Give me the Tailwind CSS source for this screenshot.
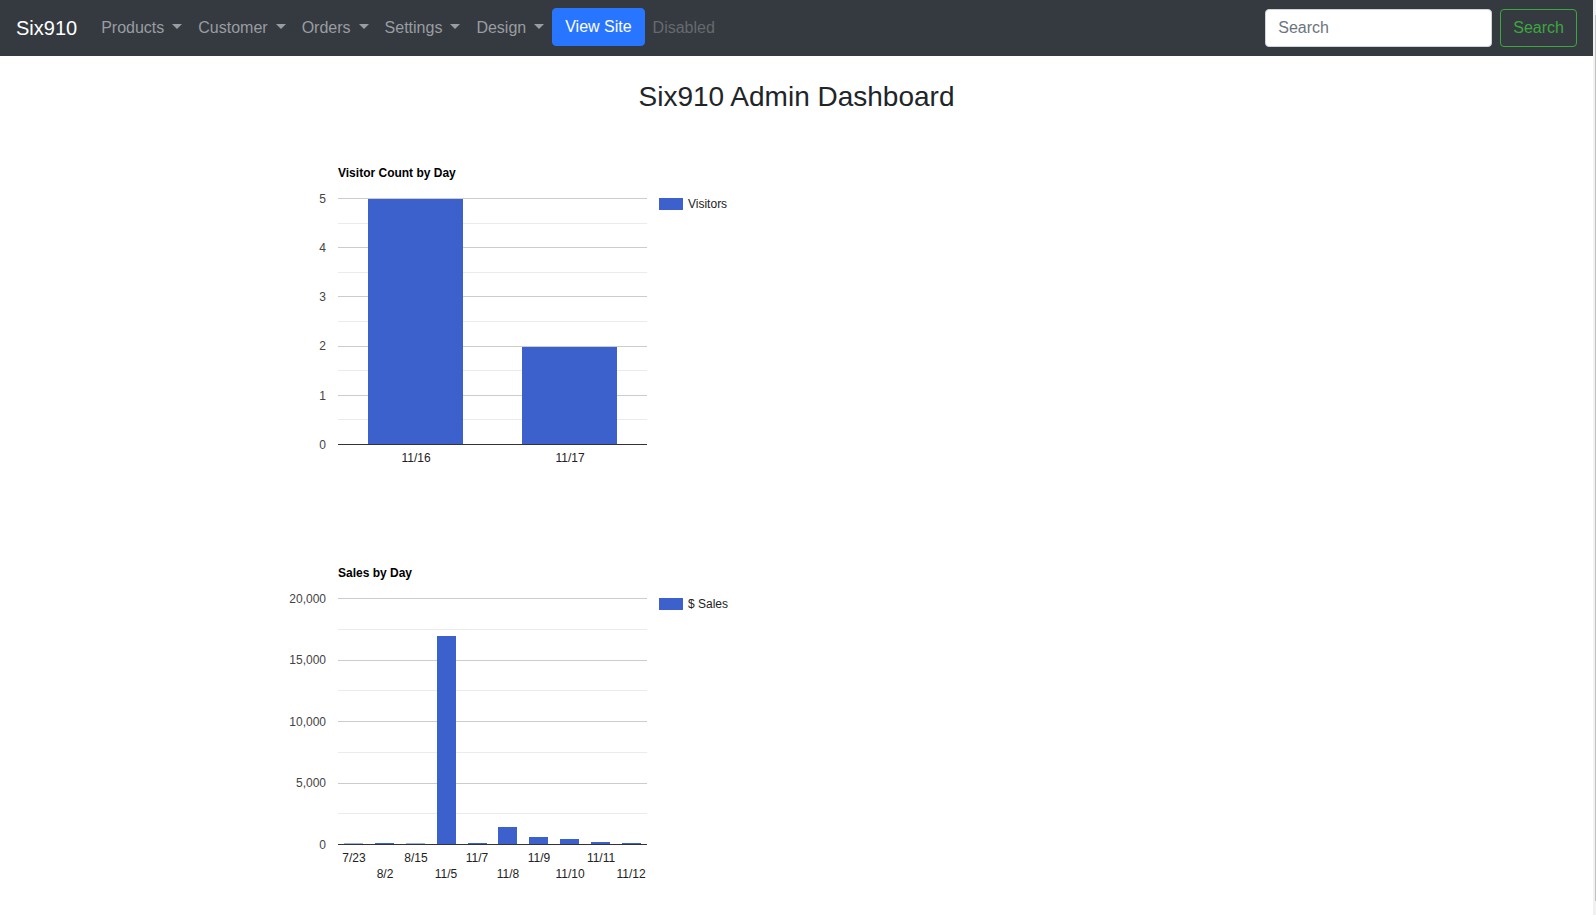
<!DOCTYPE html>
<html lang="en">
<head>
<meta charset="utf-8">
<meta name="viewport" content="width=device-width, initial-scale=1">
<title>Six910 Admin Dashboard</title>
<script src="https://cdn.jsdelivr.net/npm/@tailwindcss/browser@4"></script>
</head>
<body class="flex min-h-screen bg-white font-['Liberation_Sans',Arial,sans-serif] text-base text-[#212529]">
<div class="min-w-0 flex-1">
  <nav class="flex min-h-14 flex-wrap items-center bg-[#343a40] px-4 py-2">
    <a href="#" class="mr-4 text-xl leading-[30px] text-white">Six910</a>
    <ul class="flex flex-1 flex-wrap items-start text-[#9a9da0]">
      <li><a href="#" class="flex items-center gap-2 p-2">Products <svg class="mb-1 h-[5px] w-[10px]" viewBox="0 0 10 5" fill="currentColor" aria-hidden="true"><path d="M0 0h10L5 5z"/></svg></a></li>
      <li><a href="#" class="flex items-center gap-2 p-2">Customer <svg class="mb-1 h-[5px] w-[10px]" viewBox="0 0 10 5" fill="currentColor" aria-hidden="true"><path d="M0 0h10L5 5z"/></svg></a></li>
      <li><a href="#" class="flex items-center gap-2 p-2">Orders <svg class="mb-1 h-[5px] w-[10px]" viewBox="0 0 10 5" fill="currentColor" aria-hidden="true"><path d="M0 0h10L5 5z"/></svg></a></li>
      <li><a href="#" class="flex items-center gap-2 p-2">Settings <svg class="mb-1 h-[5px] w-[10px]" viewBox="0 0 10 5" fill="currentColor" aria-hidden="true"><path d="M0 0h10L5 5z"/></svg></a></li>
      <li><a href="#" class="flex items-center gap-2 p-2">Design <svg class="mb-1 h-[5px] w-[10px]" viewBox="0 0 10 5" fill="currentColor" aria-hidden="true"><path d="M0 0h10L5 5z"/></svg></a></li>
      <li><a href="#" class="block rounded border border-[#2875ff] bg-[#2875ff] px-3 py-1.5 text-white">View Site</a></li>
      <li><a href="#" aria-disabled="true" class="block p-2 text-[#666a6e]">Disabled</a></li>
    </ul>
    <form class="flex items-center gap-2">
      <input type="search" placeholder="Search" aria-label="Search" class="h-[38px] w-[227px] rounded border border-[#ced4da] bg-white px-3 py-1.5 placeholder:text-[#6c757d]">
      <button type="button" class="rounded border border-[#3ea63f] px-3 py-1.5 text-[#3ea63f]">Search</button>
    </form>
  </nav>
  <main>
    <h1 class="mt-6 mb-2 text-center text-[28px] leading-[34px]">Six910 Admin Dashboard</h1>
    <div class="mx-auto max-w-[1109px]">
      <svg class="block h-[400px] w-[500px]" viewBox="0 0 500 400" font-size="12" role="img" aria-label="Visitor Count by Day">
        <text x="96" y="55" font-weight="bold" fill="#000">Visitor Count by Day</text>
        <g fill="#ebebeb">
          <rect x="96" y="101" width="309" height="1"/><rect x="96" y="150" width="309" height="1"/><rect x="96" y="199" width="309" height="1"/><rect x="96" y="248" width="309" height="1"/><rect x="96" y="297" width="309" height="1"/>
        </g>
        <g fill="#ccc">
          <rect x="96" y="76" width="309" height="1"/><rect x="96" y="125" width="309" height="1"/><rect x="96" y="174" width="309" height="1"/><rect x="96" y="224" width="309" height="1"/><rect x="96" y="273" width="309" height="1"/>
        </g>
        <g fill="#3c61cc">
          <rect x="126" y="77" width="95" height="245"/><rect x="280" y="225" width="95" height="97"/>
          <rect x="417" y="76" width="24" height="12"/>
        </g>
        <rect x="96" y="322" width="309" height="1" fill="#333"/>
        <g fill="#444" text-anchor="end">
          <text x="84" y="81">5</text><text x="84" y="130">4</text><text x="84" y="179">3</text><text x="84" y="228">2</text><text x="84" y="278">1</text><text x="84" y="327">0</text>
        </g>
        <g fill="#222" text-anchor="middle"><text x="174" y="340">11/16</text><text x="328" y="340">11/17</text></g>
        <text x="446" y="86" fill="#222">Visitors</text>
      </svg>
      <svg class="block h-[380px] w-[500px]" viewBox="0 0 500 380" font-size="12" role="img" aria-label="Sales by Day">
        <text x="96" y="55" font-weight="bold" fill="#000">Sales by Day</text>
        <g fill="#ebebeb">
          <rect x="96" y="107" width="309" height="1"/><rect x="96" y="168" width="309" height="1"/><rect x="96" y="230" width="309" height="1"/><rect x="96" y="291" width="309" height="1"/>
        </g>
        <g fill="#ccc">
          <rect x="96" y="76" width="309" height="1"/><rect x="96" y="138" width="309" height="1"/><rect x="96" y="199" width="309" height="1"/><rect x="96" y="261" width="309" height="1"/>
        </g>
        <g fill="#3c61cc">
          <rect x="102" y="321" width="19" height="1" opacity=".5"/><rect x="133" y="321" width="19" height="1"/><rect x="164" y="321" width="19" height="1" opacity=".5"/><rect x="195" y="114" width="19" height="208"/><rect x="226" y="321" width="19" height="1"/><rect x="256" y="305" width="19" height="17"/><rect x="287" y="315" width="19" height="7"/><rect x="318" y="317" width="19" height="5"/><rect x="349" y="320" width="19" height="2"/><rect x="380" y="321" width="19" height="1"/>
          <rect x="417" y="76" width="24" height="12"/>
        </g>
        <rect x="96" y="322" width="309" height="1" fill="#333"/>
        <g fill="#444" text-anchor="end">
          <text x="84" y="81">20,000</text><text x="84" y="142">15,000</text><text x="84" y="204">10,000</text><text x="84" y="265">5,000</text><text x="84" y="327">0</text>
        </g>
        <g fill="#222" text-anchor="middle">
          <text x="112" y="340">7/23</text><text x="143" y="356">8/2</text><text x="174" y="340">8/15</text><text x="204" y="356">11/5</text><text x="235" y="340">11/7</text><text x="266" y="356">11/8</text><text x="297" y="340">11/9</text><text x="328" y="356">11/10</text><text x="359" y="340">11/11</text><text x="389" y="356">11/12</text>
        </g>
        <text x="446" y="86" fill="#222">$ Sales</text>
      </svg>
    </div>
  </main>
</div>
<div class="flex w-[3px] shrink-0 justify-end bg-[#f1f1f1] pt-[15px] pb-[14px]" aria-hidden="true"><div class="w-px bg-[#c1c1c1]"></div></div>
</body>
</html>
